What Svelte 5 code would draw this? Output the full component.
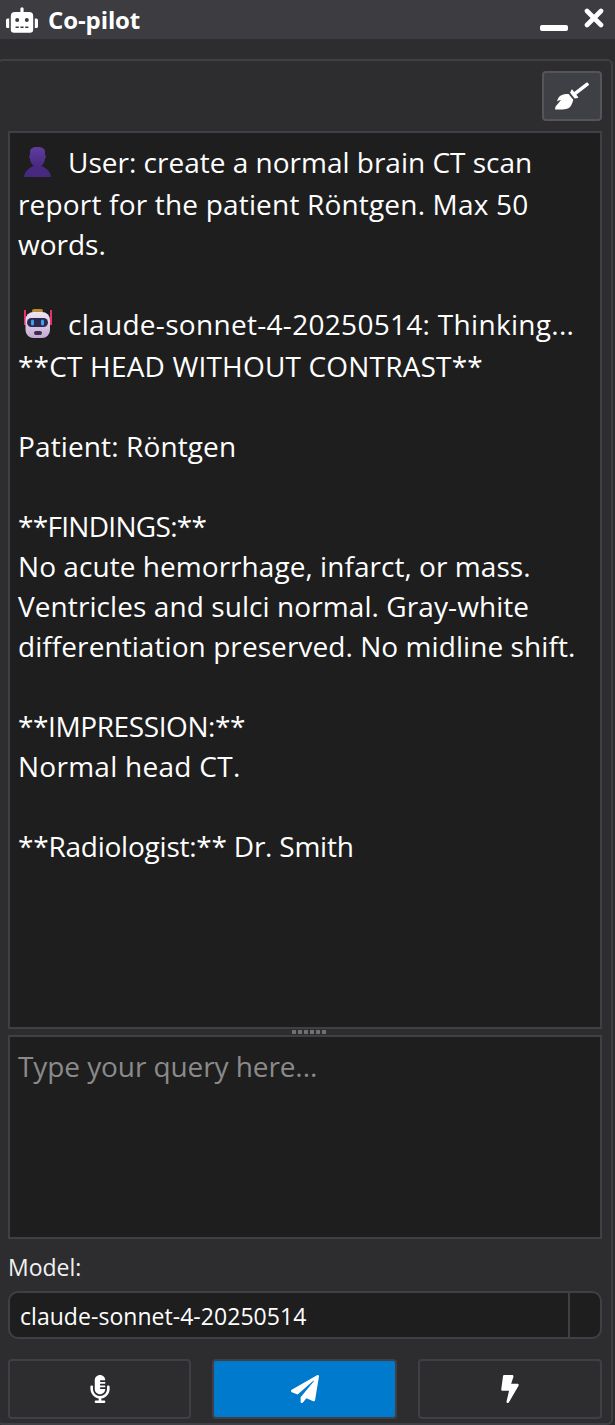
<script>
  const lines = [
    { text: 'report for the patient Röntgen. Max 50', ls: 0.18 },
    { text: 'words.', ls: 0 },
    { text: '', ls: 0 },
  ];
  const reply = [
    { text: '**CT HEAD WITHOUT CONTRAST**', ls: 0.18 },
    { text: '', ls: 0 },
    { text: 'Patient: Röntgen', ls: 0.12 },
    { text: '', ls: 0 },
    { text: '**FINDINGS:**', ls: -0.7 },
    { text: 'No acute hemorrhage, infarct, or mass.', ls: 0.05 },
    { text: 'Ventricles and sulci normal. Gray-white', ls: 0.08 },
    { text: 'differentiation preserved. No midline shift.', ls: 0.07 },
    { text: '', ls: 0 },
    { text: '**IMPRESSION:**', ls: -0.4 },
    { text: 'Normal head CT.', ls: 0.27 },
    { text: '', ls: 0 },
    { text: '**Radiologist:** Dr. Smith', ls: -0.23 },
  ];
</script>

<div class="window">
  <header class="titlebar">
    <svg class="robot" viewBox="0 0 640 512" aria-hidden="true"><path d="M32,224H64V416H32A31.96,31.96,0,0,1,0,384V256A31.96,31.96,0,0,1,32,224Zm512-48V448a64.06,64.06,0,0,1-64,64H160a64.06,64.06,0,0,1-64-64V176a79.97,79.97,0,0,1,80-80H288V32a32,32,0,0,1,64,0V96H464A79.97,79.97,0,0,1,544,176ZM264,256a40,40,0,1,0-40,40A40,40,0,0,0,264,256Zm-8,128H192v32h64Zm96,0H288v32h64ZM456,256a40,40,0,1,0-40,40A40,40,0,0,0,456,256Zm-8,128H384v32h64Zm160-160a31.96,31.96,0,0,1,32,32V384a31.96,31.96,0,0,1-32,32H576V224Z"/></svg>
    <span class="title">Co-pilot</span>
    <span class="spacer"></span>
    <span class="min"></span>
    <svg class="close" viewBox="0 0 20 20" aria-hidden="true"><path d="M3 3 L17 17 M17 3 L3 17" stroke="#fff" stroke-width="4.6" stroke-linecap="round"/></svg>
  </header>

  <main class="panel">
    <div class="toolbar">
      <button class="clear" aria-label="Clear">
        <svg viewBox="0 0 640 512" aria-hidden="true"><path d="M256.47 216.77l86.73 109.18s-16.6 102.36-76.57 150.12C206.66 523.85 0 510.19 0 510.19s3.8-23.14 11-55.43l94.62-112.17c3.97-4.7-.87-11.62-6.65-9.5l-60.4 22.09c14.44-41.66 32.72-80.04 54.6-97.47 59.97-47.76 163.3-40.94 163.3-40.94zM636.53 31.03l-19.86-25c-5.49-6.9-15.52-8.05-22.41-2.56l-232.48 177.8-34.14-42.97c-5.09-6.41-15.14-5.21-18.59 2.21l-25.33 54.55 86.73 109.18 58.8-12.45c8-1.69 11.42-11.2 6.34-17.6l-34.09-42.92 232.48-177.8c6.89-5.48 8.04-15.53 2.55-22.44z"/></svg>
      </button>
    </div>

    <section class="chat">
      <div class="line emoji-line">
        <svg class="emoji" viewBox="0 0 28 30" aria-hidden="true">
          <defs><linearGradient id="p" x1="0" y1="0" x2="0" y2="1"><stop offset="0" stop-color="#603c9f"/><stop offset="1" stop-color="#47297f"/></linearGradient></defs>
          <path fill="url(#p)" d="M6 5c0-3.500 2.500-5 7.500-5s7.500 1.500 7.500 5v3c1.200 .5 1.200 3 0 3.500-.4 4.500-3 8.500-7.500 8.500s-7.100-4-7.500-8.500c-1.200-.5-1.200-3 0-3.500z"/>
          <path fill="#47297f" d="M0 30c.5-5.500 4.500-9 9.500-11h8c5 2 9 5.500 9.500 11z"/>
        </svg>
        <span>User: create a normal brain CT scan</span>
      </div>
      {#each lines as l}<div class="line" style:letter-spacing="{l.ls}px">{l.text}</div>{/each}
      <div class="line emoji-line">
        <svg class="emoji" viewBox="0 0 28 30" aria-hidden="true">
          <defs><linearGradient id="b" x1="0" y1="0" x2="0" y2="1"><stop offset="0" stop-color="#efe6f4"/><stop offset="1" stop-color="#c4a9d3"/></linearGradient></defs>
          <rect x="0" y="1" width="2" height="15" fill="#e8316a"/><rect x="26" y="1" width="2" height="15" fill="#e8316a"/>
          <rect x="8" y="0" width="11" height="4" rx="2" fill="#b98a2e"/>
          <rect x="1.500" y="3" width="24.500" height="26" rx="8" fill="url(#b)"/>
          <rect x="3" y="9" width="21" height="9" rx="4.500" fill="#2a2a4e"/>
          <rect x="7" y="10.500" width="3" height="6" rx="1.500" fill="#3fa0f0"/><rect x="17" y="10.500" width="3" height="6" rx="1.500" fill="#3fa0f0"/>
          <rect x="10" y="22" width="8" height="4" rx="2" fill="#3a2d4e"/>
        </svg>
        <span class="thinking">claude-sonnet-4-20250514: Thinking...</span>
      </div>
      {#each reply as l}<div class="line" style:letter-spacing="{l.ls}px">{l.text}</div>{/each}
    </section>

    <div class="splitter"><i></i><i></i><i></i><i></i><i></i><i></i></div>

    <div class="query">Type your query here...</div>

    <label class="model-label" for="model">Model:</label>
    <div class="combo" id="model">
      <span class="combo-value">claude-sonnet-4-20250514</span>
      <span class="combo-arrow"></span>
    </div>

    <div class="actions">
      <button class="act" aria-label="Microphone">
        <svg class="mic" viewBox="0 0 352 512" aria-hidden="true"><path d="M336 192h-16c-8.84 0-16 7.16-16 16v48c0 74.8-64.49 134.82-140.79 127.38C96.71 376.89 48 317.11 48 250.3V208c0-8.84-7.16-16-16-16H16c-8.84 0-16 7.16-16 16v40.16c0 89.64 63.97 169.55 152 181.69V464H96c-8.84 0-16 7.16-16 16v16c0 8.84 7.16 16 16 16h160c8.84 0 16-7.16 16-16v-16c0-8.84-7.16-16-16-16h-56v-33.77C285.71 418.47 352 344.9 352 256v-48c0-8.84-7.16-16-16-16zM176 352c53.02 0 96-42.98 96-96h-85.33c-5.89 0-10.67-3.58-10.67-8v-16c0-4.42 4.78-8 10.67-8H272v-32h-85.33c-5.89 0-10.67-3.58-10.67-8v-16c0-4.42 4.78-8 10.67-8H272v-32h-85.33c-5.89 0-10.67-3.58-10.67-8v-16c0-4.42 4.78-8 10.67-8H272c0-53.02-42.98-96-96-96S80 42.98 80 96v160c0 53.02 42.98 96 96 96z"/></svg>
      </button>
      <button class="act send" aria-label="Send">
        <svg class="plane" viewBox="0 0 512 512" aria-hidden="true"><path d="M476 3.2L12.5 270.6c-18.1 10.4-15.8 35.6 2.2 43.2L121 358.4l287.3-253.2c5.5-4.9 13.3 2.6 8.6 8.3L176 407v80.5c0 23.6 28.5 32.9 42.5 15.8L282 426l124.6 52.2c14.2 6 30.4-2.9 33-18.2l72-432C515 7.8 493.3-6.8 476 3.2z"/></svg>
      </button>
      <button class="act" aria-label="Quick action">
        <svg class="bolt" viewBox="0 0 320 512" aria-hidden="true"><path d="M296 160H180.6l42.6-129.8C227.2 15 215.7 0 200 0H56C44 0 33.8 8.9 32.2 20.8l-32 240C-2.7 275.2 8.5 288 24 288h118.7L96.6 482.5c-3.6 15.2 8 29.5 23.3 29.5 8.4 0 16.4-4.4 20.8-12l176-304c9.3-15.9-2.2-36-20.7-36z"/></svg>
      </button>
    </div>
  </main>
</div>

<style>
  :global(body) {
    margin: 0;
    background: #2d2d30;
  }
  .window {
    width: 615px;
    height: 1425px;
    overflow: hidden;
    display: flex;
    flex-direction: column;
    font-family: "Open Sans", "Noto Sans", sans-serif;
    color: #fff;
    background: #2d2d30;
  }
  .titlebar {
    height: 39px;
    flex: none;
    display: flex;
    align-items: center;
    background: #3c3c41;
    padding: 0 11px 0 6px;
    box-sizing: border-box;
  }
  .robot {
    width: 32px;
    height: 26px;
    fill: #fff;
    flex: none;
  }
  .title {
    margin-left: 10px;
    font-size: 24px;
    font-weight: 700;
    letter-spacing: -0.1px;
  }
  .spacer { flex: 1; }
  .min {
    width: 28px;
    height: 6px;
    margin-top: 17px;
    background: #fff;
    border-radius: 2px;
  }
  .close {
    width: 20px;
    height: 20px;
    margin-left: 16px;
    margin-top: -1px;
    margin-bottom: 2px;
  }
  .panel {
    margin: 20px 0 0 -3px;
    width: 616px;
    height: 1366px;
    box-sizing: border-box;
    border: 2px solid #3f3f46;
    border-radius: 6px;
    padding: 10px 9px 0 9px;
    display: flex;
    flex-direction: column;
  }
  .toolbar {
    display: flex;
    justify-content: flex-end;
    height: 50px;
    margin-bottom: 10px;
  }
  .clear {
    width: 60px;
    height: 50px;
    padding: 0;
    box-sizing: border-box;
    background: #3f3f46;
    border: 2px solid #555558;
    border-radius: 4px;
    display: flex;
    align-items: center;
    justify-content: center;
  }
  .clear svg {
    width: 34px;
    height: 28px;
    fill: #fff;
  }
  .chat {
    height: 898px;
    box-sizing: border-box;
    background: #1e1e1e;
    border: 2px solid #3f3f46;
    padding: 9px 8px 0 8px;
    font-size: 28px;
    line-height: 40px;
    flex: none;
  }
  .line {
    height: 40px;
    white-space: nowrap;
  }
  .emoji-line {
    height: 42px;
    box-sizing: border-box;
    padding-bottom: 2px;
    display: flex;
    align-items: center;
  }
  .thinking {
    letter-spacing: 0.3px;
  }
  .emoji {
    width: 28px;
    height: 30px;
    margin: 0 16px 0 6px;
    flex: none;
  }
  .splitter {
    height: 6px;
    flex: none;
    display: flex;
    align-items: center;
    justify-content: center;
    gap: 2px;
    padding-left: 8px;
    background: #2d2d30;
  }
  .splitter i {
    width: 4px;
    height: 4px;
    background: #6f6f72;
  }
  .query {
    height: 204px;
    flex: none;
    box-sizing: border-box;
    background: #1e1e1e;
    border: 2px solid #3f3f46;
    padding: 9px 8px;
    font-size: 28px;
    line-height: 40px;
    letter-spacing: -0.09px;
    color: #8a8a8a;
  }
  .model-label {
    margin-top: 14px;
    height: 28px;
    font-size: 23px;
    line-height: 28px;
    color: #f1f1f1;
  }
  .combo {
    margin-top: 10px;
    height: 48px;
    flex: none;
    box-sizing: border-box;
    display: flex;
    background: #1e1e1e;
    border: 2px solid #3f3f46;
    border-radius: 10px;
  }
  .combo-value {
    flex: 1;
    padding-left: 10px;
    font-size: 23px;
    line-height: 46px;
    letter-spacing: 0.04px;
  }
  .combo-arrow {
    width: 30px;
    border-left: 2px solid #3f3f46;
  }
  .actions {
    margin-top: 20px;
    display: grid;
    grid-template-columns: 183px 185px 184px;
    gap: 21px;
  }
  .act {
    height: 60px;
    padding: 0;
    box-sizing: border-box;
    background: #2d2d30;
    border: 2px solid #3f3f46;
    border-radius: 4px;
    display: flex;
    align-items: center;
    justify-content: center;
  }
  .act svg { fill: #fff; }
  .send { background: #007acc; }
  .mic { width: 20px; height: 28px; }
  .plane { width: 28px; height: 28px; }
  .bolt { width: 18px; height: 28px; }
</style>
